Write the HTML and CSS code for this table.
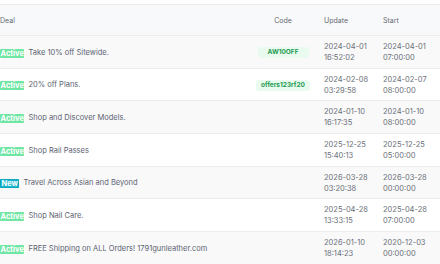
FILE: index.html
```html
<!DOCTYPE html>
<html lang="en">
<head>
   <meta charset="UTF-8">
   <meta name="viewport" content="width=device-width, initial-scale=1.0">
   <title>Deals</title>
   <link rel="stylesheet" href="styles.css">
</head>
<body>
   <div id="deals">
      <div class="row head">
         <div class="cell deal">Deal</div>
         <div class="cell code">Code</div>
         <div class="cell">Update</div>
         <div class="cell">Start</div>
      </div>
      <div class="row">
         <div class="cell deal"><span class="status active">Active</span>Take 10% off Sitewide.</div>
         <div class="cell code"><span class="coupon">AW10OFF</span></div>
         <div class="cell date">2024-04-01<br>16:52:02</div>
         <div class="cell date">2024-04-01<br>07:00:00</div>
      </div>
      <div class="row">
         <div class="cell deal"><span class="status active">Active</span>20% off Plans.</div>
         <div class="cell code"><span class="coupon">offers123rf20</span></div>
         <div class="cell date">2024-02-08<br>03:29:58</div>
         <div class="cell date">2024-02-07<br>08:00:00</div>
      </div>
      <div class="row">
         <div class="cell deal"><span class="status active">Active</span>Shop and Discover Models.</div>
         <div class="cell code"></div>
         <div class="cell date">2024-01-10<br>16:17:35</div>
         <div class="cell date">2024-01-10<br>08:00:00</div>
      </div>
      <div class="row">
         <div class="cell deal"><span class="status active">Active</span>Shop Rail Passes</div>
         <div class="cell code"></div>
         <div class="cell date">2025-12-25<br>15:40:13</div>
         <div class="cell date">2025-12-25<br>05:00:00</div>
      </div>
      <div class="row">
         <div class="cell deal"><span class="status new">New</span>Travel Across Asian and Beyond</div>
         <div class="cell code"></div>
         <div class="cell date">2026-03-28<br>03:20:38</div>
         <div class="cell date">2026-03-28<br>00:00:00</div>
      </div>
      <div class="row">
         <div class="cell deal"><span class="status active">Active</span>Shop Nail Care.</div>
         <div class="cell code"></div>
         <div class="cell date">2025-04-28<br>13:33:15</div>
         <div class="cell date">2025-04-28<br>07:00:00</div>
      </div>
      <div class="row">
         <div class="cell deal"><span class="status active">Active</span>FREE Shipping on ALL Orders! 1791gunleather.com</div>
         <div class="cell code"></div>
         <div class="cell date">2026-01-10<br>18:14:23</div>
         <div class="cell date">2020-12-03<br>00:00:00</div>
      </div>
   </div>
</body>
</html>
```

FILE: styles.css
```css
body {
   margin: 0;
   background: #ffffff;
   font-family: "Inter", "Liberation Sans", sans-serif;
   font-size: 7.5px;
   color: #5b6270;
}

#deals {
   padding-top: 4px;
}

.row {
   display: grid;
   grid-template-columns: 250px 66px 59px 1fr;
   align-items: center;
   border-top: 1px solid #ececec;
   padding: 5px 0 4.7px;
   line-height: 11px;
}

.row:nth-child(even) {
   background: #f9f9fa;
}

.row.head {
   background: #f8f9fa;
   padding: 10px 0 9px;
   color: #666a72;
   font-size: 7px;
}

.cell {
   padding-left: 8px;
}

.cell.deal {
   padding-left: 0;
   display: flex;
   align-items: center;
   gap: 4px;
}

.cell.code {
   padding-left: 0;
   text-align: center;
}

.date {
   color: #6b7079;
}

.status {
   color: #ffffff;
   font-weight: 700;
   font-size: 7.5px;
   line-height: 9px;
   padding: 0 0.5px;
   border-radius: 1px;
   margin-top: 2px;
}

.active {
   background: #6fe6a4;
}

.new {
   background: #1cb7cf;
   box-shadow: inset 0 0 0 1px #0fa6bf;
   padding: 0 1.5px;
}

.coupon {
   display: inline-block;
   min-width: 41px;
   padding: 0 5px;
   line-height: 11px;
   border-radius: 3px;
   background: #e8fbee;
   color: #1e9a52;
   font-weight: 700;
   font-size: 6.5px;
}
```
